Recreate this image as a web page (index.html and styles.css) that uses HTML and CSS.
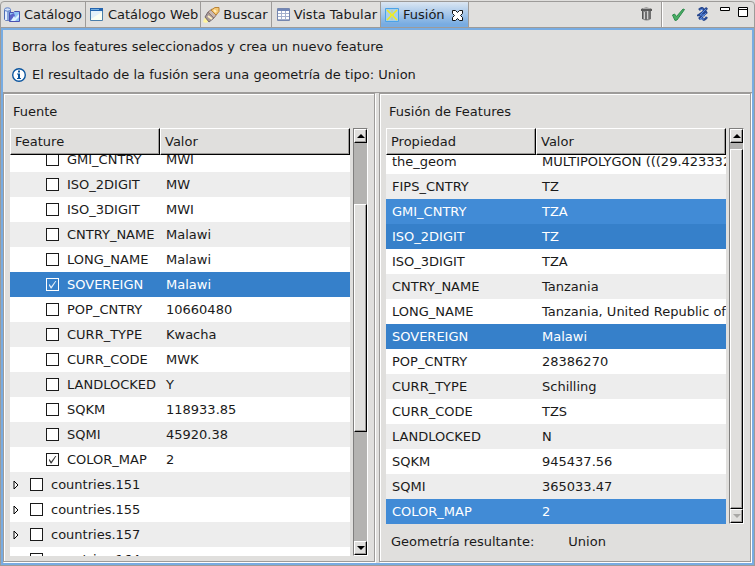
FILE: index.html
```html
<!DOCTYPE html>
<html lang="es">
<head>
<meta charset="utf-8">
<title>Fusión</title>
<link rel="stylesheet" href="styles.css">
</head>
<body>
<div class="window">
  <header class="tabbar">
    <nav class="tabs">
      <button class="tab tab-catalog"><svg width="16" height="16" viewBox="0 0 16 16"><path d="M.5 3v9c0 2 6 2 6 0V3z" fill="#86a4dc" stroke="#4d6cb4"/><path d="M2 4v9" stroke="#e2ecff" stroke-width="2"/><ellipse cx="3.5" cy="2.5" rx="3" ry="1.7" fill="#d4e2fa" stroke="#5c7ec4"/><path d="M5.500 5.500h4l1-1h5v10h-10z" fill="#8ec2f4" stroke="#4950b0"/><path d="M6 14V8l4-2 1 3z" fill="#5a62c8"/><path d="M7 14l3-5 1 2 4-4v3l-4 4z" fill="#dff2ff"/></svg>Catálogo</button>
      <button class="tab tab-web"><svg width="13" height="13" viewBox="0 0 13 13"><path d="M.5.5h12v12H.5z" fill="#e4f1fa" stroke="#4a7eaa"/><path d="M0 0h13v3H0z" fill="#2464ae"/><path d="M1 1.500h8" stroke="#72acdf"/><path d="M1 11l11-7v8H1z" fill="#fcfff4"/></svg>Catálogo Web</button>
      <button class="tab tab-search"><svg width="17" height="16" viewBox="0 0 17 16"><path d="M0 15l2-5 4 4-3 2z" fill="#fff59a"/><path d="M2 10l3-5 6 6-5 4z" fill="#a89a9a" stroke="#746b70"/><path d="M5 5l4-3 5 5-3 4z" fill="#c9b8b0" stroke="#8c7770"/><path d="M8 3l4-2.500h4v4L13 8z" fill="#f6c873" stroke="#b98336"/><path d="M5 9l4 3M11 3l2 2" stroke="#fff0c0" stroke-width="2"/></svg>Buscar</button>
      <button class="tab tab-table"><svg width="13" height="13" viewBox="0 0 13 13"><path d="M.5.5h12v12H.5z" fill="#fff" stroke="#7586ae"/><path d="M1 1h11v2H1z" fill="#7186b6"/><path d="M1 5.500h11M1 8.500h11M1 11.500h11M4.500 3v9M8.500 3v9" stroke="#a3b0cd"/></svg>Vista Tabular</button>
      <button class="tab tab-active"><svg width="14" height="14" viewBox="0 0 14 14"><path d="M.5.5h13v13H.5z" fill="#a9cfe9" stroke="#4ba3e8"/><path d="M2 2l4 4v2l-4 4M12 2L8 6v2l4 4M6 7h2" fill="none" stroke="#f4ee12" stroke-width="1.500"/><path d="M7 2v3M7 9v3" stroke="#c6d27c"/></svg>Fusión<svg class="close" width="11" height="11" viewBox="0 0 11 11"><path d="M.5.5h3l2 2 2-2h3v3l-2 2 2 2v3h-3l-2-2-2 2h-3v-3l2-2-2-2z" fill="#fff" stroke="#111"/></svg></button>
    </nav>
    <div class="tools">
      <button class="tool trash" aria-label="Eliminar"><svg width="11" height="14" viewBox="0 0 11 14"><path d="M1 3h9v9q-4 3-9 0z" fill="#8a8a8a"/><path d="M0 2q5-3 11 0v2H0z" fill="#5a5a5a"/><path d="M2 1.500h7" stroke="#aaa"/><path d="M3.500 5v7M6.500 4v8" stroke="#d0d0d0"/><path d="M1.500 4v8M5 5v8M9 4v8" stroke="#555"/></svg></button>
      <span class="divider"></span>
      <button class="tool apply" aria-label="Aplicar"><svg width="13" height="14" viewBox="0 0 13 14"><path d="M.5 8l2-1 2 2.500L11 2l1.500.5L5 13 3 13.500z" fill="#48ae63" stroke="#2e8a4c"/></svg></button>
      <button class="tool link" aria-label="Herramienta"><svg width="12" height="14" viewBox="0 0 12 14"><path d="M2 3q3-3 4-1t4-1Q7 5 2 8h6M4 7l6-2Q6 8 2 12q3-2 4 0t4-2" fill="none" stroke="#28488f" stroke-width="2.500"/><path d="M3 3l3-1M9 2L3 8h5M9 6l-6 6h4" fill="none" stroke="#5a8be0"/></svg></button>
      <button class="tool minimize" aria-label="Minimizar"><svg width="10" height="4" viewBox="0 0 10 4"><path d="M.5.500h9v3h-9z" fill="#fff" stroke="#000"/></svg></button>
      <button class="tool maximize" aria-label="Maximizar"><svg width="10" height="10" viewBox="0 0 10 10"><path d="M.5.500h9v9h-9zM0 2.500h10" fill="#fff" stroke="#000"/></svg></button>
    </div>
  </header>
  <main class="view">
    <section class="intro">
      <p>Borra los features seleccionados y crea un nuevo feature</p>
      <p class="info"><svg width="14" height="14" viewBox="0 0 14 14"><circle cx="7" cy="7" r="6.300" fill="#fff" stroke="#0b559e" stroke-width="1.400"/><path d="M6 2.500h2v2H6zM5 5.500h3V10h1v1H5v-1h1V6.500H5z" fill="#0b559e"/></svg>El resultado de la fusión sera una geometría de tipo: Union</p>
    </section>
    <div class="panels">
      <section class="panel">
        <h2>Fuente</h2>
        <div class="scroller">
          <table class="grid source">
            <thead><tr><th>Feature</th><th>Valor</th></tr></thead>
            <tbody>
              <tr><td><label><input type="checkbox">GMI_CNTRY</label></td><td>MWI</td></tr>
              <tr><td><label><input type="checkbox">ISO_2DIGIT</label></td><td>MW</td></tr>
              <tr><td><label><input type="checkbox">ISO_3DIGIT</label></td><td>MWI</td></tr>
              <tr><td><label><input type="checkbox">CNTRY_NAME</label></td><td>Malawi</td></tr>
              <tr><td><label><input type="checkbox">LONG_NAME</label></td><td>Malawi</td></tr>
              <tr class="selected"><td><label><input type="checkbox" checked>SOVEREIGN</label></td><td>Malawi</td></tr>
              <tr><td><label><input type="checkbox">POP_CNTRY</label></td><td>10660480</td></tr>
              <tr><td><label><input type="checkbox">CURR_TYPE</label></td><td>Kwacha</td></tr>
              <tr><td><label><input type="checkbox">CURR_CODE</label></td><td>MWK</td></tr>
              <tr><td><label><input type="checkbox">LANDLOCKED</label></td><td>Y</td></tr>
              <tr><td><label><input type="checkbox">SQKM</label></td><td>118933.85</td></tr>
              <tr><td><label><input type="checkbox">SQMI</label></td><td>45920.38</td></tr>
              <tr><td><label><input type="checkbox" checked>COLOR_MAP</label></td><td>2</td></tr>
              <tr class="parent"><td><button class="expand" aria-label="Expandir"><svg width="7" height="10" viewBox="0 0 7 10"><path d="M1 1v8l4-4z"/></svg></button><label><input type="checkbox">countries.151</label></td><td></td></tr>
              <tr class="parent"><td><button class="expand" aria-label="Expandir"><svg width="7" height="10" viewBox="0 0 7 10"><path d="M1 1v8l4-4z"/></svg></button><label><input type="checkbox">countries.155</label></td><td></td></tr>
              <tr class="parent"><td><button class="expand" aria-label="Expandir"><svg width="7" height="10" viewBox="0 0 7 10"><path d="M1 1v8l4-4z"/></svg></button><label><input type="checkbox">countries.157</label></td><td></td></tr>
              <tr class="parent"><td><button class="expand" aria-label="Expandir"><svg width="7" height="10" viewBox="0 0 7 10"><path d="M1 1v8l4-4z"/></svg></button><label><input type="checkbox">countries.164</label></td><td></td></tr>
            </tbody>
          </table>
          <div class="scrollbar scroll-middle">
            <button class="arrow" aria-label="Subir"><svg width="8" height="4" viewBox="0 0 8 4"><path d="M0 4l4-4 4 4z"/></svg></button>
            <div class="track"><div class="thumb"></div></div>
            <button class="arrow" aria-label="Bajar"><svg width="8" height="4" viewBox="0 0 8 4"><path d="M0 0l4 4 4-4z"/></svg></button>
          </div>
        </div>
      </section>
      <section class="panel">
        <h2>Fusión de Features</h2>
        <div class="scroller">
          <table class="grid result">
            <thead><tr><th>Propiedad</th><th>Valor</th></tr></thead>
            <tbody>
              <tr><td>the_geom</td><td>MULTIPOLYGON (((29.423332</td></tr>
              <tr><td>FIPS_CNTRY</td><td>TZ</td></tr>
              <tr class="selected"><td>GMI_CNTRY</td><td>TZA</td></tr>
              <tr class="selected"><td>ISO_2DIGIT</td><td>TZ</td></tr>
              <tr><td>ISO_3DIGIT</td><td>TZA</td></tr>
              <tr><td>CNTRY_NAME</td><td>Tanzania</td></tr>
              <tr><td>LONG_NAME</td><td>Tanzania, United Republic of</td></tr>
              <tr class="selected"><td>SOVEREIGN</td><td>Malawi</td></tr>
              <tr><td>POP_CNTRY</td><td>28386270</td></tr>
              <tr><td>CURR_TYPE</td><td>Schilling</td></tr>
              <tr><td>CURR_CODE</td><td>TZS</td></tr>
              <tr><td>LANDLOCKED</td><td>N</td></tr>
              <tr><td>SQKM</td><td>945437.56</td></tr>
              <tr><td>SQMI</td><td>365033.47</td></tr>
              <tr class="selected"><td>COLOR_MAP</td><td>2</td></tr>
            </tbody>
          </table>
          <div class="scrollbar scroll-end">
            <button class="arrow" aria-label="Subir"><svg width="8" height="4" viewBox="0 0 8 4"><path d="M0 4l4-4 4 4z"/></svg></button>
            <div class="track"><div class="thumb"></div></div>
            <button class="arrow" aria-label="Bajar" disabled><svg width="8" height="5" viewBox="0 0 8 5"><path d="M0 0l4 4 4-4z"/></svg></button>
          </div>
        </div>
        <footer class="summary"><span>Geometría resultante:</span><span>Union</span></footer>
      </section>
    </div>
  </main>
</div>
</body>
</html>
```
FILE: styles.css
```css
:root {
  --face: #e0dfdd;
  --line: #9d9b99;
  --accent: #78ace2;
  --ink: #1a1a1a;
}

* { box-sizing: border-box; }

body {
  margin: 0;
  background: var(--face);
  color: var(--ink);
  font: 13px/16px "DejaVu Sans", sans-serif;
}

button {
  margin: 0;
  padding: 0;
  border: 0;
  background: none;
  color: inherit;
  font: inherit;
}

svg { display: block; flex: none; }

.window {
  display: flex;
  flex-direction: column;
  height: 100vh;
  min-height: 400px;
  padding-top: 1px;
}

/* Tab bar */
.tabbar {
  display: flex;
  justify-content: space-between;
  flex: none;
  height: 27px;
  border: 1px solid var(--line);
  border-radius: 4px 4px 0 0;
}

.tabs, .tools { display: flex; }

.tab {
  display: flex;
  align-items: center;
  gap: 4px;
  padding: 0 3px;
  border-right: 1px solid var(--line);
  white-space: nowrap;
}

.tab-web { gap: 5px; padding: 0 2px 0 4px; }
.tab-search { gap: 3px; padding: 0 3px 0 2px; }
.tab-table { padding: 0 3px 0 5px; }

.tab-active {
  padding: 0 5px 0 4px;
  margin-bottom: -1px;
  background: linear-gradient(#dbe6f2, var(--accent) 85%);
}

.close { margin-left: 3px; }

.tools { align-items: flex-start; padding-right: 6px; }
.tool { margin-top: 5px; }
.divider {
  align-self: stretch;
  width: 2px;
  margin: 0 9px;
  border-left: 1px solid var(--line);
  border-right: 1px solid #fff;
}
.link { margin: 5px 11px 0 12px; }
.maximize { margin-left: 8px; }

/* View frame */
.view {
  display: flex;
  flex-direction: column;
  flex: 1;
  min-height: 0;
  border: 2px solid var(--accent);
  outline: 1px solid var(--line);
  margin: 0 1px 1px;
}

.intro {
  flex: none;
  display: grid;
  gap: 12px;
  padding: 9px;
  border-bottom: 1px solid var(--line);
}

.intro p { margin: 0; }
.info { display: flex; align-items: center; gap: 6px; }

.panels {
  display: grid;
  grid-template-columns: 1fr 1fr;
  gap: 4px;
  flex: 1;
  min-height: 0;
  padding: 0 1px 1px 0;
}

.panel {
  display: flex;
  flex-direction: column;
  min-width: 0;
  min-height: 0;
  padding: 0 6px 5px;
  border: 1px solid var(--line);
  box-shadow: 1px 1px 0 #fff, inset 1px 1px 0 #fff;
}

.panel h2 {
  margin: 0;
  padding: 2px 0 0 3px;
  font-size: 13px;
  font-weight: normal;
  line-height: 32px;
}

.scroller { display: flex; gap: 3px; flex: 1; min-height: 0; }

/* Data grids */
.grid {
  display: flex;
  flex-direction: column;
  flex: 1;
  min-width: 0;
}

.grid tr {
  display: grid;
  grid-template-columns: 150px minmax(0, 1fr);
}

.grid th {
  height: 27px;
  padding: 0 4px;
  border: 1px solid;
  border-color: #fff #000 #000 #fff;
  box-shadow: inset -1px -1px 0 var(--line);
  font-weight: normal;
  line-height: 26px;
  text-align: left;
}

.grid tbody {
  display: block;
  flex: 1;
  min-height: 0;
  overflow: hidden;
  background: #fff;
}

.grid tbody tr { height: 25px; background: #fff; }
.grid tbody tr:nth-child(even) { background: #ededed; }
.source tbody tr:first-child { margin-top: -8px; }
.result tbody tr:first-child { margin-top: -6px; }

.grid td {
  display: flex;
  align-items: center;
  padding: 0 0 0 6px;
  white-space: nowrap;
  overflow: hidden;
}

.source td:first-child { padding-left: 36px; }
.source .parent td:first-child { padding-left: 3px; }

.grid tbody .selected { background: #418bd6; color: #fff; }
.grid tbody .selected:nth-child(even) { background: #3680ca; }

.grid label { display: flex; align-items: center; gap: 8px; }

.expand { width: 17px; }
.expand path { fill: #fff; stroke: #000; }

input[type="checkbox"] {
  display: grid;
  flex: none;
  place-items: center;
  appearance: none;
  width: 13px;
  height: 13px;
  margin: 0;
  border: 1px solid currentColor;
  background: #fff;
  color: inherit;
}

.selected input[type="checkbox"] { background: none; }

input[type="checkbox"]:checked::before {
  content: "";
  width: 8px;
  height: 8px;
  background: currentColor;
  opacity: 0.85;
  clip-path: polygon(0 52%, 10% 44%, 34% 74%, 90% 0, 100% 4%, 38% 100%, 28% 100%);
}

/* Scroll bars */
.scrollbar {
  display: flex;
  flex-direction: column;
  flex: none;
  width: 15px;
  border: 1px solid;
  border-color: #807f7e #fff #fff #807f7e;
  background: #b4b3b1;
}

.arrow, .thumb {
  border: 1px solid;
  border-color: #fff #000 #000 #fff;
  background: var(--face);
  box-shadow: inset -1px -1px 0 var(--line);
}

.arrow {
  display: grid;
  place-items: center;
  flex: none;
  height: 14px;
}

.arrow:disabled { fill: #a9a8a6; }
.track { display: flex; flex-direction: column; flex: 1; min-height: 0; }
.scroll-middle .thumb { flex: 227; }
.scroll-middle .track::before { content: ""; flex: 61; }
.scroll-middle .track::after { content: ""; flex: 110; }
.scroll-end .thumb { flex: 359; }
.scroll-end .track::before { content: ""; flex: 6; }

.summary {
  display: flex;
  gap: 34px;
  flex: none;
  padding: 10px 5px 6px;
}
```
